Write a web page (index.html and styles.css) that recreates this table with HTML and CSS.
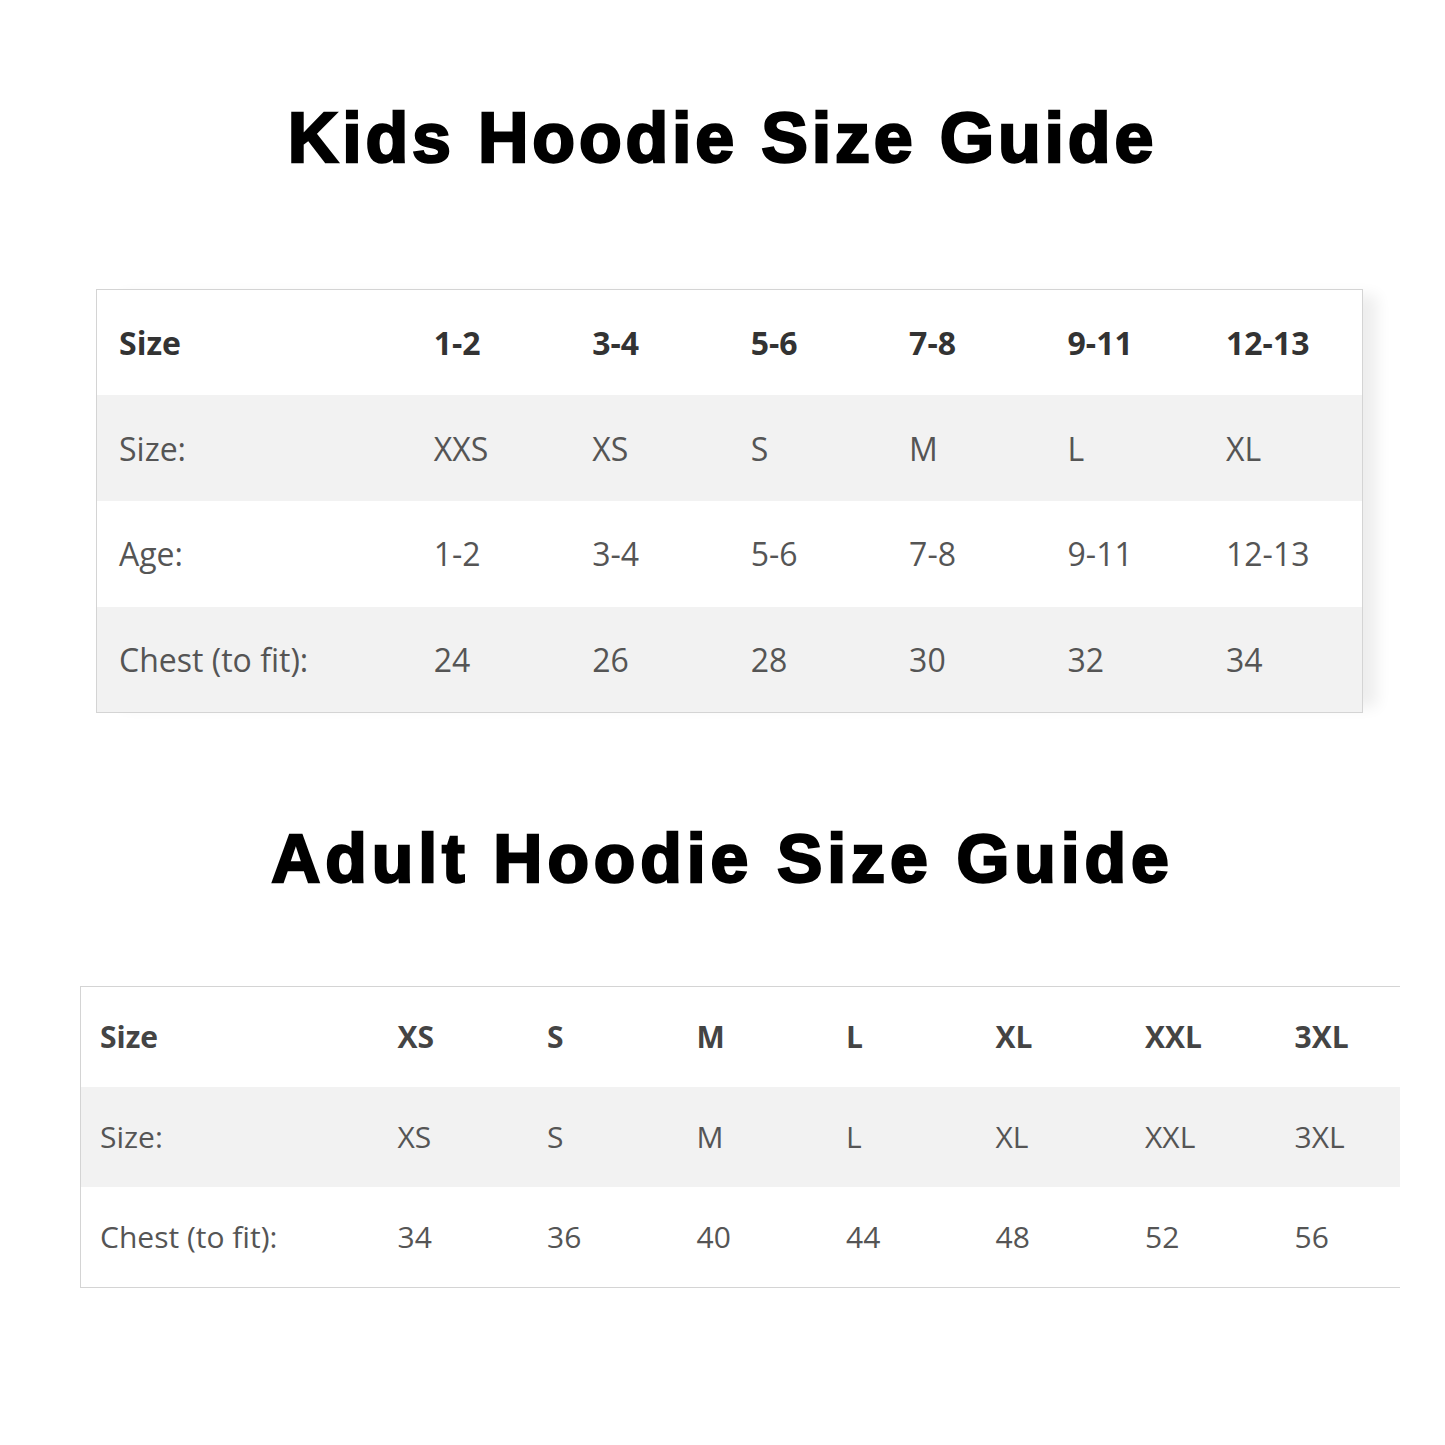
FILE: index.html
```html
<!DOCTYPE html>
<html lang="en">
<head>
<meta charset="utf-8">
<title>Hoodie Size Guide</title>
<link rel="stylesheet" href="styles.css">
</head>
<body>
<main class="page">
  <h1 class="title title-kids">Kids Hoodie Size Guide</h1>
  <div class="kids-wrap">
    <table class="chart chart-kids">
      <colgroup>
        <col class="first">
        <col><col><col><col><col><col>
      </colgroup>
      <thead>
        <tr><th>Size</th><th>1-2</th><th>3-4</th><th>5-6</th><th>7-8</th><th>9-11</th><th>12-13</th></tr>
      </thead>
      <tbody>
        <tr class="alt"><td>Size:</td><td>XXS</td><td>XS</td><td>S</td><td>M</td><td>L</td><td>XL</td></tr>
        <tr><td>Age:</td><td>1-2</td><td>3-4</td><td>5-6</td><td>7-8</td><td>9-11</td><td>12-13</td></tr>
        <tr class="alt"><td>Chest (to fit):</td><td>24</td><td>26</td><td>28</td><td>30</td><td>32</td><td>34</td></tr>
      </tbody>
    </table>
  </div>

  <h1 class="title title-adult">Adult Hoodie Size Guide</h1>
  <div class="adult-wrap">
    <table class="chart chart-adult">
      <colgroup>
        <col class="first">
        <col><col><col><col><col><col><col>
      </colgroup>
      <thead>
        <tr><th>Size</th><th>XS</th><th>S</th><th>M</th><th>L</th><th>XL</th><th>XXL</th><th>3XL</th></tr>
      </thead>
      <tbody>
        <tr class="alt"><td>Size:</td><td>XS</td><td>S</td><td>M</td><td>L</td><td>XL</td><td>XXL</td><td>3XL</td></tr>
        <tr><td>Chest (to fit):</td><td>34</td><td>36</td><td>40</td><td>44</td><td>48</td><td>52</td><td>56</td></tr>
      </tbody>
    </table>
  </div>
</main>
</body>
</html>
```

FILE: styles.css
```css
html, body {
  margin: 0;
  padding: 0;
  background: #ffffff;
}

.page {
  width: 1445px;
  min-height: 1445px;
  padding-top: 103px;
  box-sizing: border-box;
}

.title {
  margin: 0;
  text-align: center;
  font-family: "Liberation Sans", Arial, sans-serif;
  font-weight: 700;
  color: #000;
  line-height: 1;
  -webkit-text-stroke: 2.4px #000;
}

.title-kids {
  font-size: 70px;
  letter-spacing: 3.8px;
}

.title-adult {
  font-size: 68px;
  letter-spacing: 4.9px;
  margin-top: 111px;
}

.kids-wrap {
  margin-top: 116px;
  margin-left: 96px;
  width: 1267px;
  box-shadow: 20px 0 14px -6px rgba(0, 0, 0, 0.07);
}

.chart {
  border-collapse: collapse;
  table-layout: fixed;
  font-family: "Open Sans", "Liberation Sans", sans-serif;
  color: #555;
}

.chart th {
  font-weight: 700;
  color: #333;
  text-align: left;
}

.chart td {
  font-weight: 400;
  text-align: left;
}

.chart th,
.chart td {
  padding: 0 0 0 22px;
  vertical-align: middle;
  white-space: nowrap;
}

.chart .alt {
  background: #f2f2f2;
}

.chart-kids {
  width: 1267px;
  border: 1px solid #d4d4d4;
  font-size: 32px;
}

.chart-kids col {
  width: 158.33px;
}

.chart-kids col.first {
  width: 315px;
}

.chart-kids tr {
  height: 105.75px;
}

.adult-wrap {
  margin-top: 94px;
  margin-left: 80px;
  width: 1320px;
  overflow: hidden;
}

.chart-adult {
  width: 1345px;
  border: 1px solid #d4d4d4;
  font-size: 30px;
}

.chart-adult col {
  width: 149.5px;
}

.chart-adult col.first {
  width: 298px;
}

.chart-adult th,
.chart-adult td {
  padding-left: 19px;
}

.chart-adult th {
  color: #444;
}

.chart-adult tr {
  height: 100.3px;
}
```
